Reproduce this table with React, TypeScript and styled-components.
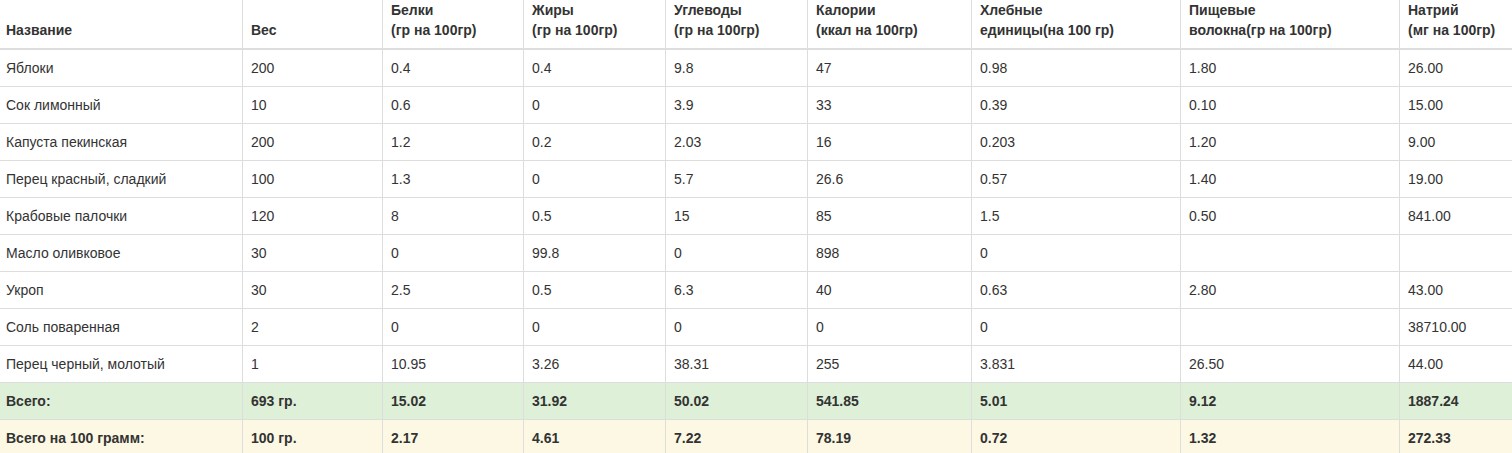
import React from "react";
import styled, { createGlobalStyle } from "styled-components";

const GlobalStyle = createGlobalStyle`
  html, body {
    margin: 0;
    padding: 0;
    background: #fff;
    overflow: hidden;
  }
  body {
    font-family: "Liberation Sans", Arial, Helvetica, sans-serif;
    font-size: 14px;
    color: #333;
  }
`;

const Viewport = styled.div`
  width: 1512px;
  height: 453px;
  overflow: hidden;
`;

const Table = styled.table`
  table-layout: fixed;
  border-collapse: collapse;
  border-spacing: 0;
  width: 1527px;
  margin: -9px 0 0 -3px;
  border: 1px solid #ddd;
  font-family: "Liberation Sans", Arial, Helvetica, sans-serif;
  font-size: 14px;
  line-height: 20px;
  color: #333;
`;

const HeadCell = styled.th`
  padding: 8px;
  text-align: left;
  vertical-align: bottom;
  font-weight: bold;
  border: 1px solid #ddd;
  border-bottom: 2px solid #ddd;
  white-space: nowrap;
  overflow: hidden;
`;

type Tone = "plain" | "success" | "warning";

const toneBg: Record<Tone, string> = {
  plain: "#fff",
  success: "#dff0d8",
  warning: "#fcf8e3",
};

const Row = styled.tr<{ $tone: Tone }>`
  background: ${(p) => toneBg[p.$tone]};
`;

const Cell = styled.td<{ $bold?: boolean }>`
  padding: 8px;
  height: 20px;
  text-align: left;
  vertical-align: top;
  border: 1px solid #ddd;
  font-weight: ${(p) => (p.$bold ? "bold" : "normal")};
  white-space: nowrap;
  overflow: hidden;
`;

const widths = [245, 140, 141, 142, 142, 164, 209, 219, 125];

const headers: [string, string?][] = [
  ["Название"],
  ["Вес"],
  ["Белки", "(гр на 100гр)"],
  ["Жиры", "(гр на 100гр)"],
  ["Углеводы", "(гр на 100гр)"],
  ["Калории", "(ккал на 100гр)"],
  ["Хлебные", "единицы(на 100 гр)"],
  ["Пищевые", "волокна(гр на 100гр)"],
  ["Натрий", "(мг на 100гр)"],
];

const rows: string[][] = [
  ["Яблоки", "200", "0.4", "0.4", "9.8", "47", "0.98", "1.80", "26.00"],
  ["Сок лимонный", "10", "0.6", "0", "3.9", "33", "0.39", "0.10", "15.00"],
  ["Капуста пекинская", "200", "1.2", "0.2", "2.03", "16", "0.203", "1.20", "9.00"],
  ["Перец красный, сладкий", "100", "1.3", "0", "5.7", "26.6", "0.57", "1.40", "19.00"],
  ["Крабовые палочки", "120", "8", "0.5", "15", "85", "1.5", "0.50", "841.00"],
  ["Масло оливковое", "30", "0", "99.8", "0", "898", "0", "", ""],
  ["Укроп", "30", "2.5", "0.5", "6.3", "40", "0.63", "2.80", "43.00"],
  ["Соль поваренная", "2", "0", "0", "0", "0", "0", "", "38710.00"],
  ["Перец черный, молотый", "1", "10.95", "3.26", "38.31", "255", "3.831", "26.50", "44.00"],
];

const totals: { tone: Tone; cells: string[] }[] = [
  {
    tone: "success",
    cells: ["Всего:", "693 гр.", "15.02", "31.92", "50.02", "541.85", "5.01", "9.12", "1887.24"],
  },
  {
    tone: "warning",
    cells: ["Всего на 100 грамм:", "100 гр.", "2.17", "4.61", "7.22", "78.19", "0.72", "1.32", "272.33"],
  },
];

export default function App() {
  return (
    <Viewport>
      <GlobalStyle />
      <Table>
        <colgroup>
          {widths.map((w, i) => (
            <col key={i} style={{ width: w }} />
          ))}
        </colgroup>
        <thead>
          <tr>
            {headers.map(([a, b], i) => (
              <HeadCell key={i}>
                {a}
                {b && (
                  <>
                    <br />
                    {b}
                  </>
                )}
              </HeadCell>
            ))}
          </tr>
        </thead>
        <tbody>
          {rows.map((r, i) => (
            <Row key={i} $tone="plain">
              {r.map((c, j) => (
                <Cell key={j}>{c}</Cell>
              ))}
            </Row>
          ))}
          {totals.map((t, i) => (
            <Row key={`t${i}`} $tone={t.tone}>
              {t.cells.map((c, j) => (
                <Cell key={j} $bold>
                  {c}
                </Cell>
              ))}
            </Row>
          ))}
        </tbody>
      </Table>
    </Viewport>
  );
}
